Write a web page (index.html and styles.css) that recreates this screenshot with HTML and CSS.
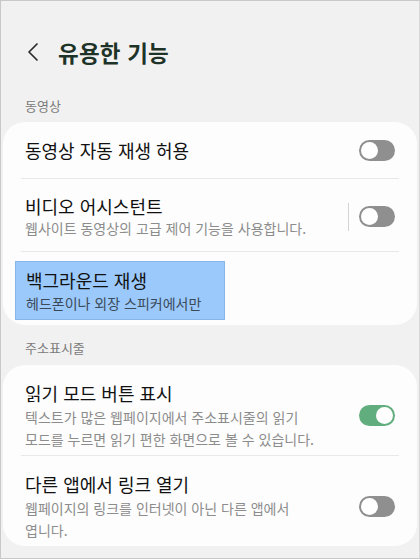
FILE: index.html
```html
<!DOCTYPE html>
<html lang="ko">
<head>
<meta charset="utf-8">
<link rel="stylesheet" href="styles.css">
</head>
<body>
<div class="screen">
  <header class="topbar">
    <svg class="back" width="12" height="20" viewBox="0 0 12 20"><path d="M10 2 L2 10 L10 18" fill="none" stroke="#2a2a2a" stroke-width="1.7" stroke-linecap="round" stroke-linejoin="round"/></svg>
    <h1 class="title">유용한 기능</h1>
  </header>

  <div class="section-label">동영상</div>
  <section class="card">
    <div class="row single">
      <div class="texts"><div class="t">동영상 자동 재생 허용</div></div>
      <div class="toggle off"><span class="knob"></span></div>
    </div>
    <div class="divider"></div>
    <div class="row one">
      <div class="texts">
        <div class="t">비디오 어시스턴트</div>
        <div class="s">웹사이트 동영상의 고급 제어 기능을 사용합니다.</div>
      </div>
      <div class="vsep"></div>
      <div class="toggle off"><span class="knob"></span></div>
    </div>
    <div class="divider"></div>
    <div class="hl-row">
      <div class="highlight">
        <div class="t">백그라운드 재생</div>
        <div class="s dark">헤드폰이나 외장 스피커에서만</div>
      </div>
    </div>
  </section>

  <div class="section-label second">주소표시줄</div>
  <section class="card">
    <div class="row two">
      <div class="texts">
        <div class="t">읽기 모드 버튼 표시</div>
        <div class="s">텍스트가 많은 웹페이지에서 주소표시줄의 읽기<br>모드를 누르면 읽기 편한 화면으로 볼 수 있습니다.</div>
      </div>
      <div class="toggle on"><span class="knob"></span></div>
    </div>
    <div class="divider"></div>
    <div class="row two">
      <div class="texts">
        <div class="t">다른 앱에서 링크 열기</div>
        <div class="s">웹페이지의 링크를 인터넷이 아닌 다른 앱에서<br>엽니다.</div>
      </div>
      <div class="toggle off"><span class="knob"></span></div>
    </div>
  </section>
</div>
</body>
</html>
```

FILE: styles.css
```css
* { box-sizing: border-box; }
html, body { margin: 0; padding: 0; }
body {
  width: 420px;
  height: 559px;
  overflow: hidden;
  background: #f1f1f1;
  font-family: "Noto Sans CJK KR", "Noto Sans", sans-serif;
}
.screen {
  width: 420px;
  height: 559px;
  border: 1px solid #c8c8c8;
  border-right-color: #d8d8d8;
  background: #f1f1f1;
  padding: 0 2px;
  overflow: hidden;
}
.topbar {
  display: flex;
  align-items: center;
  height: 97px;
  padding-left: 24px;
  padding-top: 4px;
}
.back { margin-right: 19px; }
.title {
  margin: 0;
  font-size: 22.5px;
  font-weight: 700;
  color: #1e3328;
  letter-spacing: 0.2px;
}
.section-label {
  font-size: 13px;
  color: #7a7a7a;
  padding-left: 22px;
  line-height: 16px;
  margin-bottom: 8px;
}
.section-label.second { margin-bottom: 9px; }
.card {
  background: #fdfdfd;
  border-radius: 22px;
  margin-bottom: 15px;
}
.row {
  display: flex;
  align-items: center;
  padding: 0 22px 0 22px;
}
.row.single { height: 56px; }
.row.one { padding-top: 15px; padding-bottom: 12px; }
.row.two { padding-top: 16px; padding-bottom: 5px; }
.texts { flex: 1; }
.t {
  font-size: 18px;
  color: #111;
  line-height: 24px;
}
.s {
  font-size: 14px;
  color: #8c8c8c;
  line-height: 21px;
}
.row.two .s { margin-top: 2px; line-height: 21.5px; }
.s.dark { color: #3a4a5a; margin-top: 1px; }
.divider {
  height: 1px;
  background: #e8e8e8;
  margin: 0 18px;
}
.vsep {
  width: 1px;
  height: 28px;
  background: #d4d4d4;
  margin-right: 10px;
}
.toggle {
  position: relative;
  width: 36px;
  height: 21px;
  border-radius: 11px;
  flex: none;
}
.toggle.off { background: #8f8f8f; }
.toggle.on { background: #62ad7d; }
.knob {
  position: absolute;
  top: 2px;
  width: 17px;
  height: 17px;
  border-radius: 50%;
  background: #fff;
}
.toggle.off .knob { left: 2px; }
.toggle.on .knob { right: 2px; }
.hl-row { padding: 9px 0 5px 12px; }
.highlight {
  background: #9bc9fb;
  border: 1px solid #86b6ea;
  width: 210px;
  padding: 6px 11px 5px 10px;
}
```
